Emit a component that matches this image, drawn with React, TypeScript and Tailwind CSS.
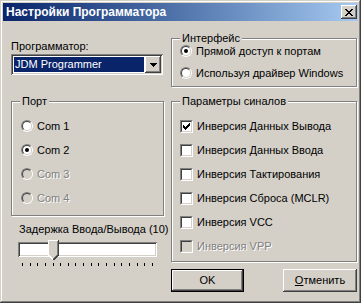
import React from "react";

const RAISED =
  "shadow-[inset_-1px_-1px_#404040,inset_1px_1px_#fff,inset_-2px_-2px_#808080,inset_2px_2px_#d4d0c8]";
const SUNKEN =
  "shadow-[inset_1px_1px_#808080,inset_-1px_-1px_#fff,inset_2px_2px_#404040,inset_-2px_-2px_#d4d0c8]";

function Radio({ checked, disabled }: { checked?: boolean; disabled?: boolean }) {
  return (
    <span className="relative block w-[12px] h-[12px] shrink-0 rounded-full border border-t-[#808080] border-l-[#808080] border-b-white border-r-white">
      <span
        className={`block w-full h-full rounded-full border border-t-[#404040] border-l-[#404040] border-b-[#d4d0c8] border-r-[#d4d0c8] ${
          disabled ? "bg-[#d4d0c8]" : "bg-white"
        }`}
      />
      {checked && (
        <span className="absolute left-[3px] top-[3px] w-[4px] h-[4px] rounded-full bg-black" />
      )}
    </span>
  );
}

function Check({ checked, disabled }: { checked?: boolean; disabled?: boolean }) {
  return (
    <span className="relative block w-[13px] h-[13px] shrink-0 border border-t-[#808080] border-l-[#808080] border-b-white border-r-white">
      <span
        className={`block w-full h-full border border-t-[#404040] border-l-[#404040] border-b-[#d4d0c8] border-r-[#d4d0c8] ${
          disabled ? "bg-[#d4d0c8]" : "bg-white"
        }`}
      />
      {checked && (
        <svg
          className="absolute left-[2px] top-[2px]"
          width="7"
          height="7"
          viewBox="0 0 7 7"
          shapeRendering="crispEdges"
        >
          <polygon points="0,2 2,4 7,-1 7,2 2,7 0,5" fill="#000" />
        </svg>
      )}
    </span>
  );
}

function Label({ children, disabled }: { children: React.ReactNode; disabled?: boolean }) {
  return (
    <span
      className={`whitespace-nowrap ${
        disabled ? "text-[#808080] [text-shadow:1px_1px_0_#fff]" : "text-black"
      }`}
    >
      {children}
    </span>
  );
}

function Group({
  title,
  className,
  children,
}: {
  title: string;
  className: string;
  children: React.ReactNode;
}) {
  return (
    <div
      className={`relative border border-[#808080] shadow-[inset_1px_1px_0_#fff,1px_1px_0_#fff] ${className}`}
    >
      <span className="absolute left-[8px] top-[-7px] px-[2px] bg-[#d4d0c8] leading-[13px] whitespace-nowrap">
        {title}
      </span>
      {children}
    </div>
  );
}

function CloseIcon() {
  const rows = [
    [0, 1, 6, 7],
    [1, 2, 5, 6],
    [2, 3, 4, 5],
    [3, 4],
    [2, 3, 4, 5],
    [1, 2, 5, 6],
    [0, 1, 6, 7],
  ];
  return (
    <svg width="8" height="7" viewBox="0 0 8 7" shapeRendering="crispEdges">
      {rows.map((r, y) =>
        r.map((x) => <rect key={`${x}-${y}`} x={x} y={y} width="1" height="1" fill="#000" />)
      )}
    </svg>
  );
}

function DownArrow() {
  return (
    <svg width="7" height="4" viewBox="0 0 7 4" shapeRendering="crispEdges">
      <rect x="0" y="0" width="7" height="1" fill="#000" />
      <rect x="1" y="1" width="5" height="1" fill="#000" />
      <rect x="2" y="2" width="3" height="1" fill="#000" />
      <rect x="3" y="3" width="1" height="1" fill="#000" />
    </svg>
  );
}

function Thumb() {
  return (
    <svg width="11" height="20" viewBox="0 0 11 20" shapeRendering="crispEdges">
      <polygon points="0,0 11,0 11,15 5.5,20 0,15" fill="#d4d0c8" />
      <polyline points="0.5,15 0.5,0.5 10,0.5" fill="none" stroke="#fff" strokeWidth="1" />
      <polyline points="10.5,0 10.5,15 5.5,20" fill="none" stroke="#404040" strokeWidth="1" />
      <polyline points="9.5,1 9.5,14.7 5.5,18.7" fill="none" stroke="#808080" strokeWidth="1" />
      <polyline points="0.5,15 5,19.5" fill="none" stroke="#fff" strokeWidth="1" />
    </svg>
  );
}

export default function App() {
  const ports = [
    { t: "Com 1", c: false, d: false },
    { t: "Com 2", c: true, d: false },
    { t: "Com 3", c: false, d: true },
    { t: "Com 4", c: false, d: true },
  ];
  const signals = [
    { t: "Инверсия Данных Вывода", c: true, d: false },
    { t: "Инверсия Данных Ввода", c: false, d: false },
    { t: "Инверсия Тактирования", c: false, d: false },
    { t: "Инверсия Сброса (MCLR)", c: false, d: false },
    { t: "Инверсия VCC", c: false, d: false },
    { t: "Инверсия VPP", c: false, d: true },
  ];
  const ticks = Array.from({ length: 18 });

  return (
    <div className="w-[364px] h-[305px] bg-white overflow-hidden font-['Liberation_Sans',Arial,sans-serif] text-[11px] leading-[13px] text-black">
      <div className="w-[361px] h-[303px] bg-[#d4d0c8] p-[3px] flex flex-col shadow-[inset_-1px_-1px_#404040,inset_1px_1px_#d4d0c8,inset_-2px_-2px_#808080,inset_2px_2px_#fff]">
        {/* Title bar */}
        <div className="h-[18px] shrink-0 flex items-center justify-between bg-gradient-to-r from-[#0a246a] to-[#a6caf0] pl-[3px] pr-[1px]">
          <span className="text-white font-bold text-[12px] leading-[14px] whitespace-nowrap">
            Настройки Программатора
          </span>
          <div className={`w-[16px] h-[14px] bg-[#d4d0c8] flex items-center justify-center ${RAISED}`}>
            <CloseIcon />
          </div>
        </div>

        {/* Body */}
        <div className="flex pl-[8px] gap-[7px]">
          {/* Left column */}
          <div className="w-[153px] flex flex-col">
            <div className="mt-[19px] whitespace-nowrap">Программатор:</div>
            <div className={`mt-[1px] w-[152px] h-[21px] bg-white p-[2px] flex ${SUNKEN}`}>
              <div className="flex-1 m-[1px] bg-[#0a246a] text-white pl-[1px] flex items-center whitespace-nowrap">
                JDM Programmer
              </div>
              <div className={`w-[16px] h-[17px] bg-[#d4d0c8] flex items-center justify-center ${RAISED}`}>
                <DownArrow />
              </div>
            </div>

            <Group title="Порт" className="mt-[26px] h-[115px] pt-[12px] pl-[9px]">
              {ports.map((p) => (
                <div key={p.t} className="h-[24px] flex items-center gap-[4px]">
                  <Radio checked={p.c} disabled={p.d} />
                  <Label disabled={p.d}>{p.t}</Label>
                </div>
              ))}
            </Group>

            <div className="mt-[7px] ml-[8px] whitespace-nowrap">Задержка Ввода/Вывода (10)</div>
            <div className={`relative mt-[6px] ml-[7px] w-[139px] h-[15px] bg-white ${SUNKEN}`}>
              <div className="absolute left-[30px] top-[-2px]">
                <Thumb />
              </div>
            </div>
            <div className="mt-[6px] ml-[11px] w-[131px] h-[3px] flex justify-between">
              {ticks.map((_, i) => (
                <span key={i} className="block w-[1px] h-[3px] bg-black" />
              ))}
            </div>
          </div>

          {/* Right column */}
          <div className="w-[186px] flex flex-col">
            <Group title="Интерфейс" className="mt-[17px] h-[49px] pt-[1px] pl-[8px]">
              <div className="h-[22px] flex items-center gap-[4px]">
                <Radio checked />
                <Label>Прямой доступ к портам</Label>
              </div>
              <div className="h-[22px] flex items-center gap-[4px]">
                <Radio />
                <Label>Используя драйвер Windows</Label>
              </div>
            </Group>

            <Group title="Параметры синалов" className="mt-[14px] h-[161px] pt-[12px] pl-[8px]">
              {signals.map((s) => (
                <div key={s.t} className="h-[24px] flex items-center gap-[4px]">
                  <Check checked={s.c} disabled={s.d} />
                  <Label disabled={s.d}>{s.t}</Label>
                </div>
              ))}
            </Group>

            <div className="mt-[7px] flex justify-between">
              <button className="w-[73px] h-[23px] border border-black bg-[#d4d0c8] flex items-center justify-center shadow-[inset_-1px_-1px_#404040,inset_1px_1px_#fff,inset_-2px_-2px_#808080,inset_2px_2px_#d4d0c8]">
                OK
              </button>
              <button className={`w-[74px] h-[23px] bg-[#d4d0c8] flex items-center justify-center ${RAISED}`}>
                <span>
                  <span className="underline">О</span>тменить
                </span>
              </button>
            </div>
          </div>
        </div>
      </div>
    </div>
  );
}
